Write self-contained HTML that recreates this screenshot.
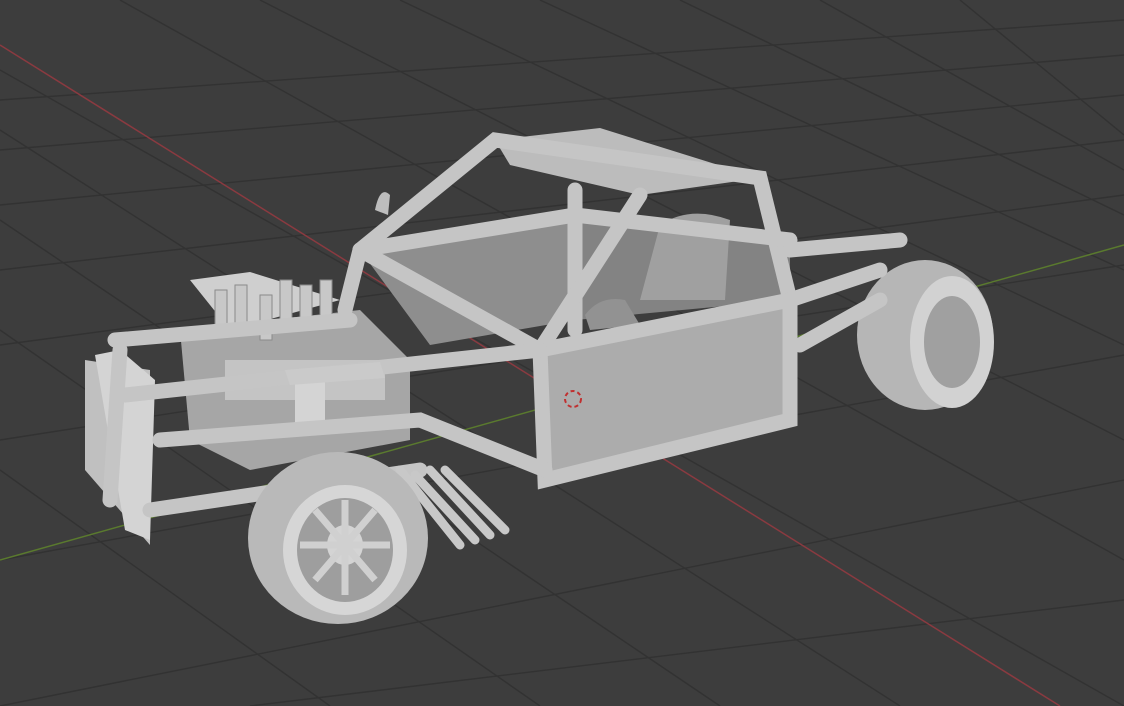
<!DOCTYPE html>
<html><head><meta charset="utf-8"><style>
html,body{margin:0;padding:0;background:#3d3d3d;width:1124px;height:706px;overflow:hidden}
</style></head><body>
<svg width="1124" height="706" viewBox="0 0 1124 706" xmlns="http://www.w3.org/2000/svg">
<rect width="1124" height="706" fill="#3d3d3d"/>
<g stroke="#323232" stroke-width="1.4" fill="none">
<path d="M0,100 L1124,20 M0,150 L1124,55 M0,205 L1124,95 M0,270 L1124,140 M0,345 L1124,195 M0,440 L1124,265 M0,560 L1124,355 M0,706 L1124,480 M250,706 L1124,600"/>
<path d="M0,70 L1124,706 M120,0 L1124,560 M260,0 L1124,440 M400,0 L1124,345 M540,0 L1124,270 M680,0 L1124,215 M820,0 L1124,170 M960,0 L1124,135 M0,130 L900,706 M0,220 L720,706 M0,330 L540,706 M0,470 L330,706"/>
</g>
<line x1="0" y1="45" x2="1060" y2="706" stroke="#8a3a40" stroke-width="1.5"/>
<line x1="0" y1="560" x2="1124" y2="245" stroke="#5a7a2e" stroke-width="1.5"/>
<polygon points="360,250 575,222 575,320 430,345" fill="#8e8e8e"/>
<polygon points="575,215 790,240 790,300 575,320" fill="#838383"/>
<path d="M640,300 L660,225 Q690,205 730,220 L725,300 Z" fill="#a0a0a0"/>
<path d="M585,315 Q600,295 625,300 L640,325 L590,330Z" fill="#929292"/>
<polygon points="495,140 600,128 760,178 640,195 510,165" fill="#bcbcbc"/>
<polygon points="540,350 790,300 790,420 545,480" fill="#acacac"/>
<ellipse cx="925" cy="335" rx="68" ry="75" fill="#b6b6b6"/>
<ellipse cx="952" cy="342" rx="42" ry="66" fill="#d2d2d2"/>
<ellipse cx="952" cy="342" rx="28" ry="46" fill="#a0a0a0"/>
<polygon points="85,360 150,370 150,545 85,470" fill="#c0c0c0"/>
<polygon points="95,355 120,350 155,380 150,540 125,530" fill="#d4d4d4"/>
<path d="M180,330 L360,310 L410,360 L410,440 L250,470 L190,440 Z" fill="#a6a6a6"/>
<rect x="225" y="360" width="160" height="40" fill="#c4c4c4"/>
<polygon points="190,280 250,272 340,300 230,330" fill="#cfcfcf"/>
<g fill="#c8c8c8" stroke="#8a8a8a" stroke-width="1">
<rect x="215" y="290" width="12" height="45"/><rect x="235" y="285" width="12" height="45"/><rect x="260" y="295" width="12" height="45"/><rect x="280" y="280" width="12" height="45"/><rect x="300" y="285" width="12" height="45"/><rect x="320" y="280" width="12" height="45"/>
</g>
<rect x="295" y="380" width="30" height="50" fill="#d4d4d4"/>
<g stroke="#c5c5c5" stroke-width="15" stroke-linecap="round" fill="none">
<path d="M360,250 L495,140 L760,178 L790,300"/>
<path d="M360,250 L540,350 L790,300"/>
<path d="M360,250 L575,215 L790,240"/>
<path d="M575,190 L575,330"/>
<path d="M640,195 L540,350"/>
<path d="M540,350 L545,480 L790,420 L790,300"/>
<path d="M115,340 L350,320"/>
<path d="M125,395 L540,350"/>
<path d="M160,440 L420,420 L545,470"/>
<path d="M150,510 L420,470"/>
<path d="M790,250 L900,240"/>
<path d="M790,300 L880,270"/>
<path d="M800,345 L880,300"/>
<path d="M360,250 L345,310"/>
<path d="M120,350 L110,500"/>
</g>
<g stroke="#c8c8c8" stroke-width="9" stroke-linecap="round">
<path d="M400,470 L460,545 M415,475 L475,540 M430,470 L490,535 M445,470 L505,530"/>
</g>
<path d="M375,210 Q380,185 390,195 L388,215 Z" fill="#bdbdbd"/>
<path d="M285,370 L380,362 L385,378 L290,385Z" fill="#cacaca"/>
<ellipse cx="338" cy="538" rx="90" ry="86" fill="#b9b9b9"/>
<ellipse cx="345" cy="550" rx="62" ry="65" fill="#d6d6d6"/>
<ellipse cx="345" cy="550" rx="48" ry="52" fill="#9e9e9e"/>
<ellipse cx="345" cy="545" rx="18" ry="20" fill="#d4d4d4"/>
<g stroke="#d0d0d0" stroke-width="7"><path d="M345,500 L345,595 M300,545 L390,545 M315,510 L375,580 M375,510 L315,580"/></g>
<circle cx="573" cy="399" r="8" fill="none" stroke="#c03030" stroke-width="2" stroke-dasharray="4 3"/>
</svg>
</body></html>
